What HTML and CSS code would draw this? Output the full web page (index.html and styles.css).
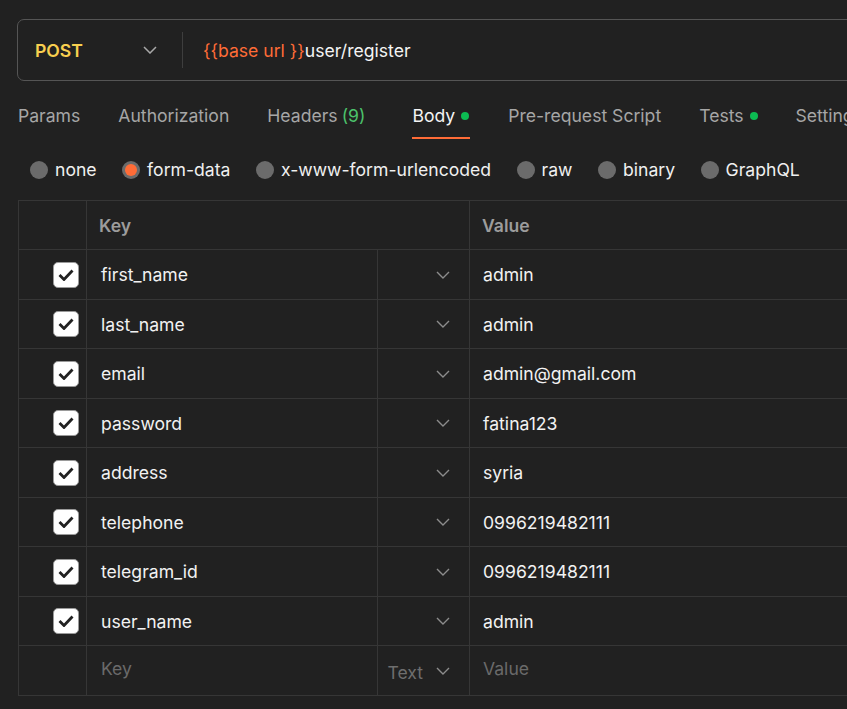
FILE: index.html
```html
<!DOCTYPE html>
<html>
<head>
<meta charset="utf-8">
<link rel="stylesheet" href="styles.css">
</head>
<body>
<div class="page">
  <div class="urlbar">
    <div class="method">
      <span class="method-name">POST</span>
      <svg class="chev chev-light" width="14" height="8" viewBox="0 0 14 8"><path d="M1 1l6 6 6-6" fill="none" stroke="currentColor" stroke-width="1.5"/></svg>
    </div>
    <div class="url"><span class="var">{{base url }}</span>user/register</div>
  </div>

  <div class="tabs">
    <div class="tab">Params</div>
    <div class="tab">Authorization</div>
    <div class="tab">Headers <span class="count">(9)</span></div>
    <div class="tab active">Body <span class="dot"></span></div>
    <div class="tab">Pre-request Script</div>
    <div class="tab">Tests <span class="dot"></span></div>
    <div class="tab">Settings</div>
  </div>

  <div class="radios">
    <label class="radio"><span class="circle"></span>none</label>
    <label class="radio"><span class="circle on"></span>form-data</label>
    <label class="radio"><span class="circle"></span>x-www-form-urlencoded</label>
    <label class="radio"><span class="circle"></span>raw</label>
    <label class="radio"><span class="circle"></span>binary</label>
    <label class="radio"><span class="circle"></span>GraphQL</label>
  </div>

  <div class="table">
    <div class="row head">
      <div class="cell chk"></div>
      <div class="cell keyhead">Key</div>
      <div class="cell val">Value</div>
    </div>

    <div class="row h50">
      <div class="cell chk"><span class="box"><svg width="16" height="12" viewBox="0 0 16 12"><path d="M1.5 6l4.5 4.5L14.5 1.5" fill="none" stroke="#222" stroke-width="2.8"/></svg></span></div>
      <div class="cell key">first_name</div>
      <div class="cell type"><svg class="chev" width="14" height="8" viewBox="0 0 14 8"><path d="M1 1l6 6 6-6" fill="none" stroke="currentColor" stroke-width="1.4"/></svg></div>
      <div class="cell val">admin</div>
    </div>
    <div class="row h49">
      <div class="cell chk"><span class="box"><svg width="16" height="12" viewBox="0 0 16 12"><path d="M1.5 6l4.5 4.5L14.5 1.5" fill="none" stroke="#222" stroke-width="2.8"/></svg></span></div>
      <div class="cell key">last_name</div>
      <div class="cell type"><svg class="chev" width="14" height="8" viewBox="0 0 14 8"><path d="M1 1l6 6 6-6" fill="none" stroke="currentColor" stroke-width="1.4"/></svg></div>
      <div class="cell val">admin</div>
    </div>
    <div class="row h50">
      <div class="cell chk"><span class="box"><svg width="16" height="12" viewBox="0 0 16 12"><path d="M1.5 6l4.5 4.5L14.5 1.5" fill="none" stroke="#222" stroke-width="2.8"/></svg></span></div>
      <div class="cell key">email</div>
      <div class="cell type"><svg class="chev" width="14" height="8" viewBox="0 0 14 8"><path d="M1 1l6 6 6-6" fill="none" stroke="currentColor" stroke-width="1.4"/></svg></div>
      <div class="cell val">admin@gmail.com</div>
    </div>
    <div class="row h49">
      <div class="cell chk"><span class="box"><svg width="16" height="12" viewBox="0 0 16 12"><path d="M1.5 6l4.5 4.5L14.5 1.5" fill="none" stroke="#222" stroke-width="2.8"/></svg></span></div>
      <div class="cell key">password</div>
      <div class="cell type"><svg class="chev" width="14" height="8" viewBox="0 0 14 8"><path d="M1 1l6 6 6-6" fill="none" stroke="currentColor" stroke-width="1.4"/></svg></div>
      <div class="cell val">fatina123</div>
    </div>
    <div class="row h50">
      <div class="cell chk"><span class="box"><svg width="16" height="12" viewBox="0 0 16 12"><path d="M1.5 6l4.5 4.5L14.5 1.5" fill="none" stroke="#222" stroke-width="2.8"/></svg></span></div>
      <div class="cell key">address</div>
      <div class="cell type"><svg class="chev" width="14" height="8" viewBox="0 0 14 8"><path d="M1 1l6 6 6-6" fill="none" stroke="currentColor" stroke-width="1.4"/></svg></div>
      <div class="cell val">syria</div>
    </div>
    <div class="row h49">
      <div class="cell chk"><span class="box"><svg width="16" height="12" viewBox="0 0 16 12"><path d="M1.5 6l4.5 4.5L14.5 1.5" fill="none" stroke="#222" stroke-width="2.8"/></svg></span></div>
      <div class="cell key">telephone</div>
      <div class="cell type"><svg class="chev" width="14" height="8" viewBox="0 0 14 8"><path d="M1 1l6 6 6-6" fill="none" stroke="currentColor" stroke-width="1.4"/></svg></div>
      <div class="cell val">0996219482111</div>
    </div>
    <div class="row h50">
      <div class="cell chk"><span class="box"><svg width="16" height="12" viewBox="0 0 16 12"><path d="M1.5 6l4.5 4.5L14.5 1.5" fill="none" stroke="#222" stroke-width="2.8"/></svg></span></div>
      <div class="cell key">telegram_id</div>
      <div class="cell type"><svg class="chev" width="14" height="8" viewBox="0 0 14 8"><path d="M1 1l6 6 6-6" fill="none" stroke="currentColor" stroke-width="1.4"/></svg></div>
      <div class="cell val">0996219482111</div>
    </div>
    <div class="row h49">
      <div class="cell chk"><span class="box"><svg width="16" height="12" viewBox="0 0 16 12"><path d="M1.5 6l4.5 4.5L14.5 1.5" fill="none" stroke="#222" stroke-width="2.8"/></svg></span></div>
      <div class="cell key">user_name</div>
      <div class="cell type"><svg class="chev" width="14" height="8" viewBox="0 0 14 8"><path d="M1 1l6 6 6-6" fill="none" stroke="currentColor" stroke-width="1.4"/></svg></div>
      <div class="cell val">admin</div>
    </div>
    <div class="row h50 last">
      <div class="cell chk"></div>
      <div class="cell key ph">Key</div>
      <div class="cell type"><span class="typetext">Text</span><svg class="chev" width="14" height="8" viewBox="0 0 14 8"><path d="M1 1l6 6 6-6" fill="none" stroke="currentColor" stroke-width="1.4"/></svg></div>
      <div class="cell val ph">Value</div>
    </div>
  </div>
</div>
</body>
</html>
```

FILE: styles.css
```css
html, body {
  margin: 0;
  padding: 0;
  background: #212121;
  overflow: hidden;
}
body {
  font-family: Inter, "Noto Sans", sans-serif;
  font-size: 17.6px;
  color: #f0f0f0;
}
.page {
  width: 847px;
  height: 709px;
  overflow: hidden;
  padding-top: 19px;
  box-sizing: border-box;
}
.urlbar {
  margin-left: 17px;
  width: 900px;
  height: 62px;
  box-sizing: border-box;
  border: 1px solid #555;
  border-radius: 7px;
  display: flex;
  align-items: center;
}
.method {
  width: 165px;
  box-sizing: border-box;
  padding-left: 17px;
  padding-right: 25px;
  display: flex;
  align-items: center;
  justify-content: space-between;
  border-right: 1px solid #3e3e3e;
  height: 36px;
}
.method-name {
  color: #f8cf4f;
  font-weight: 600;
}
.chev {
  color: #8c8c8c;
  display: block;
}
.chev-light {
  color: #a8a8a8;
}
.url {
  padding-left: 20px;
  color: #f4f4f4;
}
.var {
  color: #ff6c37;
}
.tabs {
  display: flex;
  gap: 38px;
  margin-top: 15px;
  padding-left: 18px;
  height: 43px;
  box-sizing: border-box;
  white-space: nowrap;
}
.tab {
  color: #a6a6a6;
  display: flex;
  align-items: flex-start;
  gap: 6px;
  line-height: 40px;
  height: 43px;
  box-sizing: border-box;
}
.tab.active {
  color: #f4f4f4;
  border-bottom: 2px solid #ff6c37;
  margin-left: 9px;
  padding-right: 1px;
}
.count {
  color: #4cc26b;
  margin-left: -2px;
}
.dot {
  width: 8px;
  height: 8px;
  border-radius: 50%;
  background: #0cbb52;
  margin-top: 16px;
}
.radios {
  display: flex;
  align-items: center;
  padding-left: 30px;
  gap: 25.5px;
  height: 61px;
}
.radio {
  display: flex;
  align-items: center;
  gap: 7px;
  color: #f0f0f0;
}
.circle {
  width: 18px;
  height: 18px;
  border-radius: 50%;
  background: #6b6b6b;
  display: flex;
  align-items: center;
  justify-content: center;
}
.circle.on::after {
  content: "";
  width: 12px;
  height: 12px;
  border-radius: 50%;
  background: #ff6c37;
}
.table {
  margin-left: 18px;
  width: 900px;
  border-left: 1px solid #363636;
  border-top: 1px solid #363636;
}
.row {
  display: grid;
  grid-template-columns: 68px 291px 92px 1fr;
  box-sizing: border-box;
  border-bottom: 1px solid #363636;
}
.h50 { height: 50px; }
.h49 { height: 49px; }
.row.head { height: 49px; }
.cell {
  display: flex;
  align-items: center;
  border-right: 1px solid #363636;
  box-sizing: border-box;
  min-width: 0;
}
.chk {
  justify-content: flex-end;
  padding-right: 7px;
}
.box {
  width: 26px;
  height: 26px;
  box-sizing: border-box;
  border-radius: 5px;
  background: #ffffff;
  border: 1px solid #9a9a9a;
  display: flex;
  align-items: center;
  justify-content: center;
}
.keyhead {
  grid-column: 2 / 4;
  padding-left: 12px;
  color: #9c9c9c;
  font-weight: 600;
}
.head .val {
  padding-left: 12px;
  color: #9c9c9c;
  font-weight: 600;
}
.key {
  padding-left: 14px;
  color: #f2f2f2;
}
.type {
  justify-content: flex-end;
  padding-right: 19px;
  gap: 13px;
}
.typetext {
  color: #6e6e6e;
  padding-top: 3px;
}
.val {
  padding-left: 13px;
  color: #f2f2f2;
  border-right: none;
}
.ph {
  color: #6a6a6a;
  padding-bottom: 4px;
}
```
